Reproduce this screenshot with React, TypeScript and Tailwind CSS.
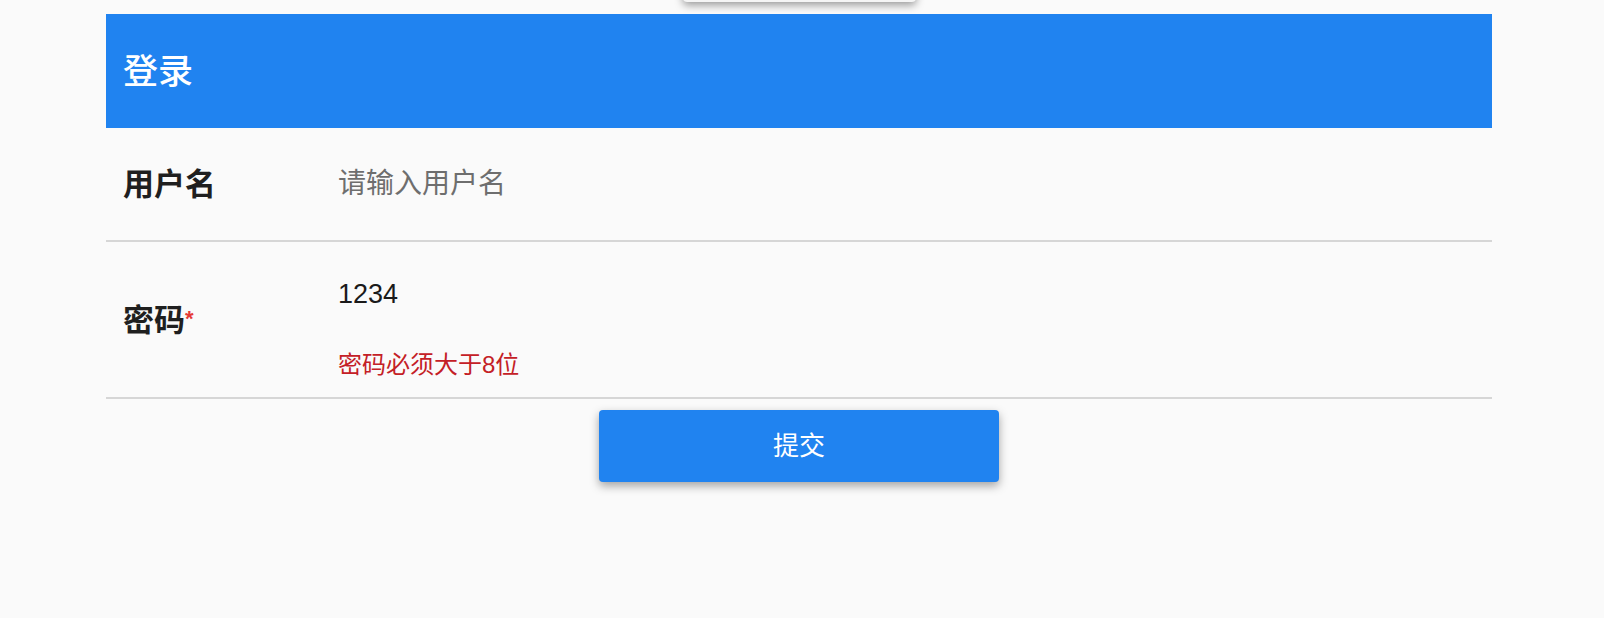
const FONT = "font-['Liberation_Sans','Noto_Sans_CJK_SC',sans-serif]"

export default function App() {
  return (
    <div className={`min-h-[618px] w-full bg-[#fafafa] overflow-hidden ${FONT}`}>
      <div className="ml-[106px] w-[1386px] flex flex-col">
        {/* previous card, mostly scrolled off */}
        <div className="self-center -mt-[40px] mb-[12px] h-[42px] w-[233px] rounded-[4px] bg-[#f5f5f5] shadow-[0_3px_8px_rgba(0,0,0,0.4)]" />

        {/* Header */}
        <div className="h-[114px] bg-[#2083f0] flex items-center px-[17px]">
          <h1 className="text-[35px] text-white leading-none font-medium">登录</h1>
        </div>

        {/* Username */}
        <div className="h-[114px] flex items-center border-b-2 border-[#d6d6d6]">
          <label className="w-[232px] pl-[17px] pt-[3px] text-[31px] font-bold text-[#1f1f1f]">用户名</label>
          <input
            className="flex-1 bg-transparent outline-none text-[28px] text-[#212121] placeholder:text-[#6e6e6e]"
            placeholder="请输入用户名"
          />
        </div>

        {/* Password */}
        <div className="h-[157px] flex items-center border-b-2 border-[#d6d6d6]">
          <label className="w-[232px] pl-[17px] pt-[4px] text-[31px] font-bold text-[#1f1f1f] flex items-center">
            密码<span className="text-[22px] text-[#e53935] leading-none -mt-[6px]">*</span>
          </label>
          <div className="flex-1 flex flex-col pt-[12px]">
            <input
              className="bg-transparent outline-none text-[27px] text-[#1a1a1a] h-[40px]"
              defaultValue="1234"
              type="text"
            />
            <p className="mt-[38px] text-[24px] text-[#c42026] leading-none">密码必须大于8位</p>
          </div>
        </div>

        {/* Submit */}
        <button className="self-center mt-[11px] h-[72px] w-[400px] rounded-[4px] bg-[#2083f0] text-white text-[26px] shadow-[0_4px_10px_rgba(0,0,0,0.35)]">
          提交
        </button>
      </div>
    </div>
  )
}
